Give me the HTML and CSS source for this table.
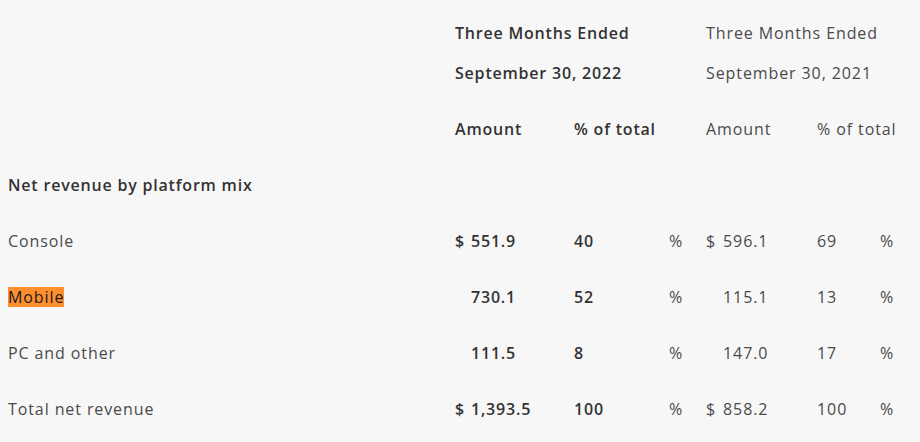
FILE: index.html
```html
<!DOCTYPE html>
<html>
<head>
<meta charset="utf-8">
<link rel="stylesheet" href="styles.css">
</head>
<body>
<table class="fin">
  <colgroup>
    <col class="c-label"><col class="c-amt1"><col class="c-pct1"><col class="c-sign1"><col class="c-amt2"><col class="c-pct2"><col class="c-sign2">
  </colgroup>
  <tr class="h1">
    <td></td>
    <td colspan="3" class="b">Three Months Ended</td>
    <td colspan="3">Three Months Ended</td>
  </tr>
  <tr class="h2">
    <td></td>
    <td colspan="3" class="b">September 30, 2022</td>
    <td colspan="3">September 30, 2021</td>
  </tr>
  <tr class="h3">
    <td></td>
    <td class="b">Amount</td>
    <td colspan="2" class="b">% of total</td>
    <td>Amount</td>
    <td colspan="2">% of total</td>
  </tr>
  <tr class="row">
    <td class="b">Net revenue by platform mix</td>
    <td></td><td></td><td></td><td></td><td></td><td></td>
  </tr>
  <tr class="row">
    <td>Console</td>
    <td class="b"><span class="cur">$</span>551.9</td>
    <td class="b">40</td>
    <td>%</td>
    <td><span class="cur2">$</span>596.1</td>
    <td>69</td>
    <td>%</td>
  </tr>
  <tr class="row">
    <td><span class="hl">Mobile</span></td>
    <td class="b"><span class="cur"></span>730.1</td>
    <td class="b">52</td>
    <td>%</td>
    <td><span class="cur2"></span>115.1</td>
    <td>13</td>
    <td>%</td>
  </tr>
  <tr class="row">
    <td>PC and other</td>
    <td class="b"><span class="cur"></span>111.5</td>
    <td class="b">8</td>
    <td>%</td>
    <td><span class="cur2"></span>147.0</td>
    <td>17</td>
    <td>%</td>
  </tr>
  <tr class="row">
    <td>Total net revenue</td>
    <td class="b"><span class="cur">$</span>1,393.5</td>
    <td class="b">100</td>
    <td>%</td>
    <td><span class="cur2">$</span>858.2</td>
    <td>100</td>
    <td>%</td>
  </tr>
</table>
</body>
</html>
```
FILE: styles.css
```css
html, body {
  margin: 0;
  background: #f7f7f7;
}
body {
  padding: 13px 0 0 8px;
  font-family: "Open Sans", "Liberation Sans", sans-serif;
  font-size: 16px;
  letter-spacing: 0.9px;
  color: #4a4a4a;
}
.fin {
  border-collapse: collapse;
  border-spacing: 0;
  table-layout: fixed;
  width: 904px;
}
.c-label { width: 447px; }
.c-amt1 { width: 119px; }
.c-pct1 { width: 95px; }
.c-sign1 { width: 37px; }
.c-amt2 { width: 111px; }
.c-pct2 { width: 63px; }
.c-sign2 { width: 32px; }
td {
  padding: 18px 0;
  line-height: 20px;
  white-space: nowrap;
  vertical-align: middle;
  text-align: left;
}
.h1 td, .h2 td { padding: 10px 0; }
.h3 td { padding: 26px 0 18px; }
.b {
  font-weight: 600;
  color: #333;
  letter-spacing: 0.8px;
}
.cur {
  display: inline-block;
  width: 16px;
}
.cur2 {
  display: inline-block;
  width: 17px;
}
.hl {
  display: inline-block;
  line-height: 20px;
  background: #ff8f2e;
  color: #1a1a1a;
}
```
